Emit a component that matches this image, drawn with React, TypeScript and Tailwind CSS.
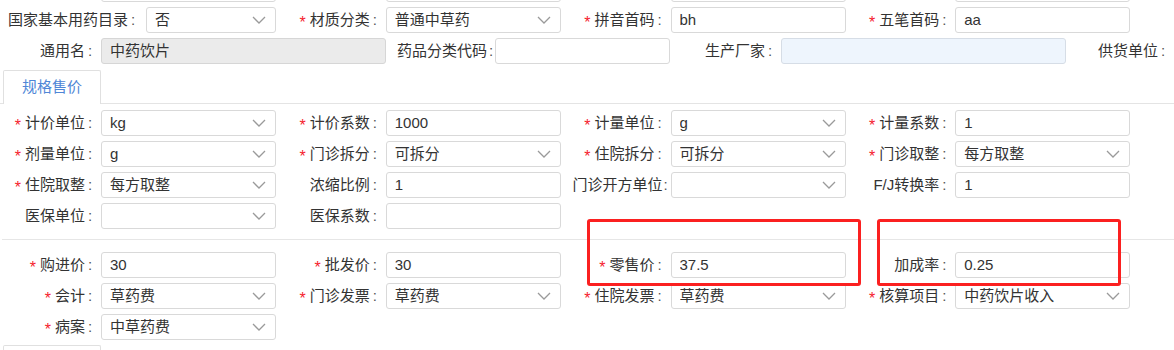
import React from "react";

type Kind = "input" | "select" | "gray" | "blue";

function Chevron() {
  return (
    <svg width="14" height="8" viewBox="0 0 14 8" className="shrink-0">
      <path d="M1 1 L7 7 L13 1" fill="none" stroke="#9a9a9a" strokeWidth="1.3" />
    </svg>
  );
}

function Box({ kind = "input", value = "", w = "w-[175px]" }: { kind?: Kind; value?: string; w?: string }) {
  const bg =
    kind === "gray"
      ? "bg-[#ebebeb] border-[#d6d6d6]"
      : kind === "blue"
      ? "bg-[#eef5fd] border-[#d6dde6]"
      : "bg-white border-[#d9d9d9]";
  return (
    <div className={`${w} h-[26px] shrink-0 border ${bg} rounded-[3px] flex items-center pl-[8px] pr-[9px] text-[#333]`}>
      <span className="flex-1 whitespace-nowrap overflow-hidden">{value}</span>
      {kind === "select" && <Chevron />}
    </div>
  );
}

type FieldProps = {
  label?: string;
  req?: boolean;
  value?: string;
  kind?: Kind;
  lw?: string;
  iw?: string;
  cw?: string;
};

function Field({
  label = "",
  req = false,
  value = "",
  kind = "input",
  lw = "w-[101px]",
  iw = "w-[175px]",
  cw = "w-[16px] pl-[3px]",
}: FieldProps) {
  return (
    <div className="flex items-center h-[26px]">
      <div className={`${lw} shrink-0 flex justify-end items-center whitespace-nowrap text-[#333]`}>
        {req && <span className="text-[#f5222d] text-[16px] mr-[4px] translate-y-[3px]">*</span>}
        <span>{label}</span>
        <span className={`${cw} shrink-0 text-[#555]`}>:</span>
      </div>
      <Box kind={kind} value={value} w={iw} />
    </div>
  );
}

function Row({ children, mt }: { children: React.ReactNode; mt: string }) {
  return <div className={`grid grid-cols-4 w-[1139px] h-[26px] ${mt}`}>{children}</div>;
}

export default function App() {
  return (
    <div className="relative w-[1174px] h-[350px] overflow-hidden bg-white text-[15px] font-['Liberation_Sans','Noto_Sans_CJK_SC',sans-serif]">
      <div className="flex flex-col">
        {/* partially hidden row above */}
        <div className="grid grid-cols-4 w-[1139px] h-[26px] -mt-[24px]">
          {[0, 1, 2, 3].map((i) => (
            <div key={i} className="flex">
              <div className="w-[101px]" />
              <Box />
            </div>
          ))}
        </div>

        <Row mt="mt-[5px]">
          <Field label="国家基本用药目录" kind="select" value="否" lw="w-[146px]" iw="w-[130px]" cw="w-[18px] pl-[3px]" />
          <Field label="材质分类" req kind="select" value="普通中草药" />
          <Field label="拼音首码" req value="bh" />
          <Field label="五笔首码" req value="aa" />
        </Row>

        <div className="flex mt-[5px] h-[26px]">
          <Field label="通用名" kind="gray" value="中药饮片" iw="w-[285px]" />
          <Field label="药品分类代码" lw="w-[109px]" cw="w-[8px] pl-[2px]" />
          <Field label="生产厂家" kind="blue" lw="w-[111px]" iw="w-[285px]" />
          <div className="flex items-center h-[26px]">
            <div className="w-[104px] flex justify-end whitespace-nowrap text-[#333]">
              <span>供货单位</span>
              <span className="w-[12px] pl-[3px] text-[#555]">:</span>
            </div>
          </div>
        </div>

        {/* tab bar */}
        <div className="mt-[6px] h-[34px] border-b border-[#e4e4e4] flex pl-[3px]">
          <div className="w-[98px] h-[34px] border border-b-0 border-[#e0e0e0] bg-white flex items-center justify-center text-[#4f86d6] rounded-t-[2px]">
            规格售价
          </div>
        </div>

        <Row mt="mt-[6px]">
          <Field label="计价单位" req kind="select" value="kg" />
          <Field label="计价系数" req value="1000" />
          <Field label="计量单位" req kind="select" value="g" />
          <Field label="计量系数" req value="1" />
        </Row>
        <Row mt="mt-[5px]">
          <Field label="剂量单位" req kind="select" value="g" />
          <Field label="门诊拆分" req kind="select" value="可拆分" />
          <Field label="住院拆分" req kind="select" value="可拆分" />
          <Field label="门诊取整" req kind="select" value="每方取整" />
        </Row>
        <Row mt="mt-[5px]">
          <Field label="住院取整" req kind="select" value="每方取整" />
          <Field label="浓缩比例" value="1" />
          <Field label="门诊开方单位" kind="select" cw="w-[8px] pl-[1px]" />
          <Field label="F/J转换率" value="1" />
        </Row>
        <Row mt="mt-[5px]">
          <Field label="医保单位" kind="select" />
          <Field label="医保系数" />
          <div />
          <div />
        </Row>

        <div className="mt-[10px] ml-[2px] h-px bg-[#e6e6e6]" />

        <Row mt="mt-[12px]">
          <Field label="购进价" req value="30" />
          <Field label="批发价" req value="30" />
          <Field label="零售价" req value="37.5" />
          <Field label="加成率" value="0.25" />
        </Row>
        <Row mt="mt-[5px]">
          <Field label="会计" req kind="select" value="草药费" />
          <Field label="门诊发票" req kind="select" value="草药费" />
          <Field label="住院发票" req kind="select" value="草药费" />
          <Field label="核算项目" req kind="select" value="中药饮片收入" />
        </Row>
        <Row mt="mt-[5px]">
          <Field label="病案" req kind="select" value="中草药费" />
          <div />
          <div />
          <div />
        </Row>

        <div className="mt-[5px] ml-[3px] w-[98px] h-[20px] border border-b-0 border-[#e0e0e0] rounded-t-[2px]" />
      </div>

      {/* red annotation boxes */}
      <div className="absolute left-[587px] top-[219px] w-[274px] h-[67px] border-[3px] border-[#fb2020] rounded-[3px]" />
      <div className="absolute left-[877px] top-[219px] w-[244px] h-[67px] border-[3px] border-[#fb2020] rounded-[3px]" />
    </div>
  );
}
